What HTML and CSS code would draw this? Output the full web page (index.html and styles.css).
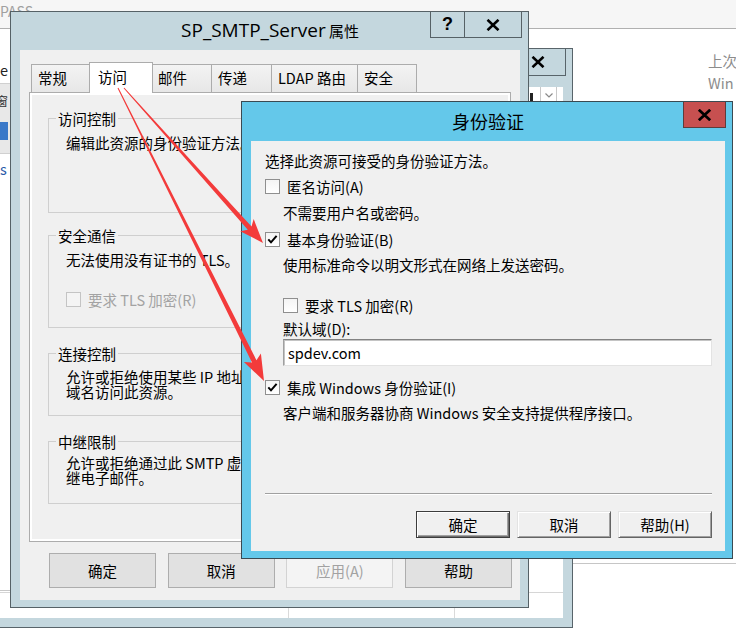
FILE: index.html
```html
<!DOCTYPE html>
<html lang="zh-CN">
<head>
<meta charset="utf-8">
<title>SP_SMTP_Server 属性 - 身份验证</title>
<link rel="stylesheet" href="styles.css">
</head>
<body>
<div class="desktop">

  <div class="bgapp">
    <div class="topstrip"><span class="crumb">PASS</span></div>
    <div class="bgbody">
      <div class="recent"><div>上次</div><div>Win</div></div>
      <div class="bgrule"></div>
    </div>
  </div>

  <div class="leftscrap">
    <div class="scrap-e">e</div>
    <div class="scrap-tools">
      <span class="scrap-glyph">窗</span>
      <span class="scrap-help"></span>
    </div>
    <div class="scrap-s">s</div>
  </div>

  <div class="win back">
    <div class="back-title">
      <span class="back-close">
        <svg class="xicon" width="14" height="12" viewBox="0 0 14 12"><path d="M1.5 0.8 L12.5 11.2 M12.5 0.8 L1.5 11.2" stroke="#000" stroke-width="2.6" fill="none"/></svg>
      </span>
    </div>
    <div class="back-client">
      <div class="back-toolbar">
        <span class="bt-icon"></span>
        <span class="bt-drop"><svg width="8" height="5" viewBox="0 0 8 5"><path d="M0.5 0.5 L4 4 L7.5 0.5" stroke="#8a8a8a" stroke-width="1.2" fill="none"/></svg></span>
      </div>
      <div class="back-row">
        <span class="br-cell c1"></span><span class="br-cell c2"></span><span class="br-cell c3"></span>
      </div>
    </div>
  </div>

  <div class="win main">
    <div class="main-title"><span class="title-latin">SP_SMTP_Server</span> <span class="title-cjk">属性</span></div>
    <div class="caption">
      <span class="cap-btn cap-help">?</span>
      <span class="cap-btn cap-close">
        <svg class="xicon" width="14" height="12" viewBox="0 0 14 12"><path d="M1.5 0.8 L12.5 11.2 M12.5 0.8 L1.5 11.2" stroke="#000" stroke-width="2.6" fill="none"/></svg>
      </span>
    </div>
    <div class="client">
      <div class="tabs">
        <span class="tab">常规</span>
        <span class="tab active">访问</span>
        <span class="tab">邮件</span>
        <span class="tab">传递</span>
        <span class="tab wide">LDAP 路由</span>
        <span class="tab last">安全</span>
      </div>
      <div class="panel">
        <div class="group g1">
          <span class="group-title">访问控制</span>
          <p>编辑此资源的身份验证方法。</p>
        </div>
        <div class="group g2">
          <span class="group-title">安全通信</span>
          <p>无法使用没有证书的 TLS。</p>
          <div class="cb-row">
            <span class="cb disabled"></span>
            <span class="cb-label disabled-text">要求 TLS 加密(R)</span>
          </div>
        </div>
        <div class="group g3">
          <span class="group-title">连接控制</span>
          <p>允许或拒绝使用某些 IP 地址或<br>域名访问此资源。</p>
        </div>
        <div class="group g4">
          <span class="group-title">中继限制</span>
          <p>允许或拒绝通过此 SMTP 虚拟服务器中<br>继电子邮件。</p>
        </div>
      </div>
      <div class="dlg-buttons">
        <button class="btn">确定</button>
        <button class="btn">取消</button>
        <button class="btn" disabled>应用(A)</button>
        <button class="btn">帮助</button>
      </div>
    </div>
  </div>

  <div class="win auth">
    <div class="auth-title">身份验证</div>
    <span class="auth-close">
      <svg class="xicon" width="15" height="12" viewBox="0 0 15 12"><path d="M1.8 0.8 L13.2 11.2 M13.2 0.8 L1.8 11.2" stroke="#000" stroke-width="2.8" fill="none"/></svg>
    </span>
    <div class="auth-client">
      <p class="lead">选择此资源可接受的身份验证方法。</p>
      <div class="cb-row r1">
        <span class="cb"></span>
        <span class="cb-label">匿名访问(A)</span>
      </div>
      <p class="desc d1">不需要用户名或密码。</p>
      <div class="cb-row r2">
        <span class="cb"><svg width="13" height="13" viewBox="0 0 13 13"><path d="M2.3 6.3 L5 9.3 L10.6 2.8" stroke="#000" stroke-width="2" fill="none"/></svg></span>
        <span class="cb-label">基本身份验证(B)</span>
      </div>
      <p class="desc d2">使用标准命令以明文形式在网络上发送密码。</p>
      <div class="cb-row r3">
        <span class="cb"></span>
        <span class="cb-label">要求 TLS 加密(R)</span>
      </div>
      <p class="desc d3">默认域(D):</p>
      <div class="textbox">spdev.com</div>
      <div class="cb-row r4">
        <span class="cb"><svg width="13" height="13" viewBox="0 0 13 13"><path d="M2.3 6.3 L5 9.3 L10.6 2.8" stroke="#000" stroke-width="2" fill="none"/></svg></span>
        <span class="cb-label">集成 Windows 身份验证(I)</span>
      </div>
      <p class="desc d4">客户端和服务器协商 Windows 安全支持提供程序接口。</p>
      <div class="sep"></div>
      <div class="auth-buttons">
        <button class="btn3d default">确定</button>
        <button class="btn3d">取消</button>
        <button class="btn3d">帮助(H)</button>
      </div>
    </div>
  </div>

  <svg class="arrows" width="736" height="631" viewBox="0 0 736 631">
    <polygon points="124.37,87.67 251.51,226.44 253.68,219.12 263,243 240.28,231.14 247.79,229.78 123.63,88.33" fill="#f33b3b"/>
    <polygon points="118.45,87.78 256.43,360.20 260.91,353.49 264,381 243.91,361.97 251.95,362.42 117.55,88.22" fill="#f33b3b"/>
  </svg>
</div>
</body>
</html>
```

FILE: styles.css
```css
* { box-sizing: border-box; }
html, body { margin: 0; padding: 0; }
body {
  width: 736px;
  height: 631px;
  overflow: hidden;
  background: #fff;
  font-family: "Noto Sans CJK SC", "Noto Sans", sans-serif;
  font-size: 14.5px;
  line-height: 15px;
  color: #000;
}
p { margin: 0; }
button { font-family: inherit; font-size: inherit; line-height: 15px; cursor: default; }

.desktop { position: relative; width: 736px; height: 631px; overflow: hidden; }

/* background application */
.bgapp { position: absolute; inset: 0; display: flex; flex-direction: column; background: #fff; }
.topstrip { height: 29px; background: #f6f6f6; border-bottom: 1px solid #b0b0b0; padding-top: 4px; }
.crumb { display: block; margin-left: 0; color: #a0a0a0; font-size: 14px; line-height: 15px; }
.bgbody { flex: 1; display: flex; flex-direction: column; }
.recent { align-self: flex-end; width: 28px; margin-top: 21px; color: #8c8c8c; line-height: 22px; white-space: nowrap; overflow: hidden; }
.bgrule { margin-top: auto; margin-bottom: 67px; height: 1px; background: #c6c6c6; }

.leftscrap {
  position: absolute; left: 0; top: 29px; width: 10px; height: 562px;
  background: #fff; z-index: 2; overflow: hidden;
  display: flex; flex-direction: column;
  border-bottom: 1px solid #c8c8c8;
}
.scrap-e { margin-top: 33px; line-height: 15px; color: #222; }
.scrap-tools {
  margin-top: 6px; height: 71px; background: #e8e8e8;
  border-top: 1px solid #d0d0d0; border-bottom: 1px solid #d0d0d0;
  display: flex; flex-direction: column;
}
.scrap-glyph { font-size: 12px; line-height: 14px; margin-top: 10px; margin-left: -4px; color: #333; }
.scrap-help { margin-top: 14px; width: 8px; height: 18px; background: #3a78c8; }
.scrap-s { margin-top: 7px; color: #2b5aa8; line-height: 15px; }

/* windows */
.win { position: absolute; }

.back {
  left: -20px; top: 48px; width: 593px; height: 580px;
  background: #c4d7de; border: 1px solid #58646a;
  display: flex; flex-direction: column; z-index: 1;
}
.back-title { height: 38px; display: flex; justify-content: flex-end; padding-right: 6px; }
.back-close {
  width: 57px; height: 27px; border: 1px solid #58646a; border-top: 0;
  display: flex; align-items: center; justify-content: center;
}
.back-client { flex: 1; margin: 0 9px 9px 10px; background: #fff; display: flex; flex-direction: column; }
.back-toolbar { height: 14px; display: flex; justify-content: flex-end; }
.bt-icon { width: 13px; border-left: 1px solid #d0d0d0; display: flex; align-items: flex-end; padding-left: 2px; }
.bt-icon::before { content: ""; width: 3px; height: 8px; background: #222; }
.bt-drop {
  width: 17px; margin-right: 6px; border-left: 1px solid #c8c8c8; border-right: 1px solid #c8c8c8;
  display: flex; align-items: center; justify-content: center; padding-top: 3px;
}
.back-row { margin-top: auto; height: 26px; border-top: 1px solid #d6d6d6; display: flex; }
.br-cell { display: block; height: 100%; }
.c1 { width: 298px; border-right: 1px solid #dadada; }
.c2 { width: 166px; border-right: 1px solid #dadada; }
.c3 { flex: 1; }

/* main property dialog */
.main {
  left: 10px; top: 11px; width: 519px; height: 597px;
  background: #c4d7de; border: 1px solid #566166;
  padding: 0 8px 7px 9px;
  display: flex; flex-direction: column; z-index: 3;
}
.main-title { height: 38px; line-height: 36px; text-align: center; white-space: nowrap; }
.title-latin { font-family: "Open Sans", "Noto Sans", sans-serif; font-size: 19px; }
.title-cjk { font-size: 15px; }
.caption { position: absolute; top: 0; right: 6px; display: flex; }
.cap-btn {
  height: 26px; border: 1px solid #566166; border-top: 0;
  display: flex; align-items: center; justify-content: center;
}
.cap-help { width: 35px; font: bold 18px/1 "Liberation Sans", sans-serif; padding-bottom: 2px; }
.cap-close { width: 57px; border-left: 0; }

.client { flex: 1; background: #f0f0f0; display: flex; flex-direction: column; }
.tabs {
  display: flex; align-items: flex-end; height: 30px; margin-top: 12px;
  padding-left: 11px; position: relative; z-index: 1;
}
.tab {
  height: 28px; min-width: 60px; padding: 0 6px;
  border: 1px solid #acacac; border-bottom: 0; border-right: 0;
  background: linear-gradient(#f3f3f3, #e7e7e7);
  line-height: 26px; white-space: nowrap;
}
.tab.last { border-right: 1px solid #acacac; }
.tab.wide { min-width: 86px; }
.tab.active {
  height: 31px; min-width: 64px; margin: 0 -2px -1px; padding: 0 8px;
  border-right: 1px solid #acacac; background: #fff;
  line-height: 28px; position: relative; z-index: 2;
}

.panel {
  height: 450px; margin: 0 9px;
  border: 1px solid #acacac; background: #f0f0f0;
  box-shadow: inset 0 0 0 2px #fff;
  padding: 25px 18px 0;
  display: flex; flex-direction: column;
}
.group { position: relative; border: 1px solid #cfcfcf; padding: 16px 10px 0 17px; white-space: nowrap; }
.group-title { position: absolute; top: -8px; left: 7px; padding: 0 2px; background: #f0f0f0; }
.g1 { height: 95px; }
.g2 { height: 93px; margin-top: 22px; }
.g3 { height: 63px; margin-top: 25px; padding-top: 15px; }
.g4 { height: 63px; margin-top: 25px; padding-top: 13px; }
.g2 .cb-row { margin-top: 25px; }

.cb-row { display: flex; align-items: center; height: 15px; white-space: nowrap; }
.cb {
  width: 15px; height: 15px; flex: none;
  border: 1px solid #8f8f8f; background: linear-gradient(#f4f4f4, #fff);
  display: flex; align-items: center; justify-content: center;
}
.cb.disabled { border-color: #c4c4c4; background: #f4f4f4; }
.cb-label { margin-left: 7px; }
.disabled-text { color: #a3a3a3; }

.dlg-buttons { display: flex; justify-content: space-between; height: 35px; margin-top: 11px; padding: 0 8px 0 29px; }
.btn { width: 107px; height: 35px; border: 1px solid #adadad; background: #e1e1e1; color: #000; padding: 0; }
.btn:disabled { border-color: #d3d3d3; background: #f4f4f4; color: #a2a2a2; }

/* authentication dialog */
.auth {
  left: 241px; top: 101px; width: 492px; height: 458px;
  background: #64c8ea; border: 1px solid #3a4a52;
  padding: 0 7px 7px 9px;
  display: flex; flex-direction: column; z-index: 4;
}
.auth-title { height: 39px; line-height: 39px; text-align: center; font-size: 18px; }
.auth-close {
  position: absolute; top: 0; right: 6px; width: 43px; height: 26px;
  background: #c75050; border: 1px solid #5e3c3c; border-top: 0;
  display: flex; align-items: center; justify-content: center;
}
.auth-client {
  flex: 1; background: #f0f0f0;
  padding: 12px 13px 13px 14px;
  display: flex; flex-direction: column; white-space: nowrap;
}
.r1 { margin-top: 11px; }
.d1 { margin-top: 11px; }
.r2 { margin-top: 12px; }
.d2 { margin-top: 10px; }
.r3 { margin-top: 26px; margin-left: 18px; }
.d3 { margin-top: 8px; }
.r4 { margin-top: 14px; }
.d4 { margin-top: 10px; }
.desc { margin-left: 18px; }
.textbox {
  margin: 3px 0 0 18px; height: 27px; background: #fff;
  border: 1px solid; border-color: #828282 #e3e3e3 #e3e3e3 #a0a0a0;
  box-shadow: inset 1px 1px 0 #c4c4c4;
  padding-left: 4px; line-height: 25px;
}
.sep { margin: auto 0 16px 0; height: 2px; border-top: 1px solid #a0a0a0; border-bottom: 1px solid #fff; }
.auth-buttons { display: flex; justify-content: flex-end; gap: 7px; }
.btn3d {
  width: 94px; height: 27px; padding: 0; color: #000;
  background: #f0f0f0;
  border: 1px solid; border-color: #e3e3e3 #646464 #646464 #e3e3e3;
  box-shadow: inset 1px 1px 0 #fff, inset -1px -1px 0 #a0a0a0;
}
.btn3d.default {
  border-color: #3c3c3c;
  box-shadow: inset 1px 1px 0 #fff, inset -1px -1px 0 #6e6e6e, inset -2px -2px 0 #a0a0a0;
}

.arrows { position: absolute; left: 0; top: 0; z-index: 5; pointer-events: none; }
```
